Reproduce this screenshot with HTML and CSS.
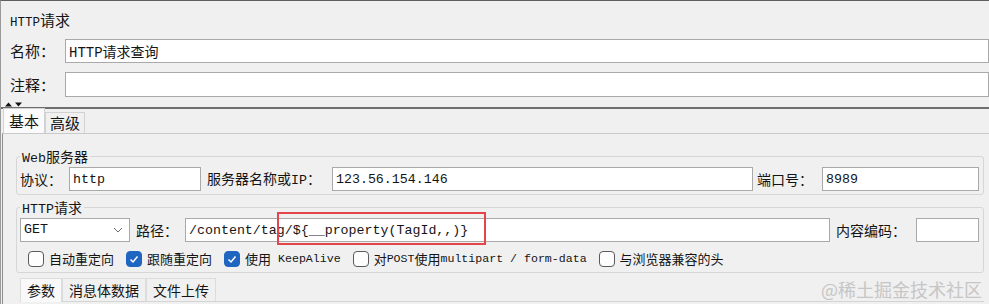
FILE: index.html
```html
<!DOCTYPE html>
<html lang="zh-CN">
<head>
    <meta charset="UTF-8">
    <title>HTTP请求</title>
    <link rel="stylesheet" href="styles.css">
</head>
<body>
    <div class="window">
        <div class="title"><span class="mono">HTTP</span>请求</div>

        <div class="field-row">
            <label>名称：</label>
            <input type="text" value="HTTP请求查询">
        </div>
        <div class="field-row tall">
            <label>注释：</label>
            <input type="text" value="">
        </div>

        <div class="splitter">
            <svg width="22" height="5" viewBox="0 0 22 5">
                <polygon points="3,4.5 6.5,0.5 10,4.5" fill="#111"/>
                <polygon points="13,0.5 20,0.5 16.5,4.5" fill="#111"/>
            </svg>
        </div>

        <div class="tabs">
            <span class="tab active">基本</span>
            <span class="tab">高级</span>
        </div>

        <div class="panel">
            <fieldset class="group">
                <legend><span class="mono">Web</span>服务器</legend>
                <div class="line">
                    <label class="gap-r7">协议：</label>
                    <input class="proto" type="text" value="http">
                    <label class="host-label">服务器名称或<span class="mono">IP</span>：</label>
                    <input class="host" type="text" value="123.56.154.146">
                    <label class="port-label">端口号：</label>
                    <input class="port" type="text" value="8989">
                </div>
            </fieldset>

            <fieldset class="group second">
                <legend><span class="mono">HTTP</span>请求</legend>
                <div class="line">
                    <div class="select">
                        <span class="mono">GET</span>
                        <svg width="10" height="6" viewBox="0 0 10 6">
                            <polyline points="1,1 5,5 9,1" fill="none" stroke="#6b6b6b" stroke-width="1"/>
                        </svg>
                    </div>
                    <label class="path-label">路径：</label>
                    <div class="path-wrap">
                        <input type="text" value="/content/tag/${__property(TagId,,)}">
                        <div class="mark"></div>
                    </div>
                    <label class="enc-label">内容编码：</label>
                    <input class="enc" type="text" value="">
                </div>

                <div class="checks">
                    <div class="check">
                        <span class="box"></span>自动重定向
                    </div>
                    <div class="check">
                        <span class="box on">
                            <svg width="14" height="14" viewBox="0 0 14 14"><polyline points="3.5,7.5 6,10 10.5,4.5" fill="none" stroke="#fff" stroke-width="1.5"/></svg>
                        </span>跟随重定向
                    </div>
                    <div class="check">
                        <span class="box on">
                            <svg width="14" height="14" viewBox="0 0 14 14"><polyline points="3.5,7.5 6,10 10.5,4.5" fill="none" stroke="#fff" stroke-width="1.5"/></svg>
                        </span>使用<span class="mono"> KeepAlive</span>
                    </div>
                    <div class="check">
                        <span class="box"></span>对<span class="mono">POST</span>使用<span class="mono">multipart / form-data</span>
                    </div>
                    <div class="check">
                        <span class="box"></span>与浏览器兼容的头
                    </div>
                </div>
            </fieldset>

            <div class="subtabs">
                <span class="subtab active">参数</span>
                <span class="subtab">消息体数据</span>
                <span class="subtab">文件上传</span>
            </div>
        </div>

        <div class="watermark">@稀土掘金技术社区</div>
    </div>
</body>
</html>
```

FILE: styles.css
```css
body {
    margin: 0;
    background-color: #f0f0f0;
}

.window {
    position: relative;
    width: 989px;
    height: 304px;
    box-sizing: border-box;
    overflow: hidden;
    border-top: 1px solid #5f5f5f;
    border-left: 1px solid #9a9a9a;
    background-color: #f0f0f0;
    color: #141414;
    font-family: "Noto Sans CJK SC", sans-serif;
    font-size: 14px;
    line-height: 16px;
}

.mono {
    font-family: "Liberation Mono", monospace;
    font-size: 13.3px;
}

input {
    box-sizing: border-box;
    height: 24px;
    margin: 0;
    padding: 0 3px;
    border: 1px solid #a9a9a9;
    border-radius: 0;
    background-color: #fff;
    color: #141414;
    font-family: "Liberation Mono", "Noto Sans CJK SC", monospace;
    font-size: 13.3px;
    outline: none;
}

label {
    white-space: nowrap;
}

/* top part */

.title {
    height: 38px;
    line-height: 38px;
    padding-left: 9px;
    font-size: 15px;
}

.title .mono {
    font-size: 12.5px;
}

.field-row {
    display: flex;
    align-items: center;
    height: 24px;
    padding-left: 9px;
    margin-bottom: 9px;
    font-size: 15px;
}

.field-row label {
    width: 55px;
}

.field-row input {
    flex: 1;
    height: 100%;
    font-size: 14px;
}

.field-row.tall {
    height: 25px;
    margin-bottom: 0;
}

.splitter {
    height: 5px;
    padding: 5px 0 0 1px;
    border-bottom: 2px solid #6e6e6e;
}

.splitter svg {
    display: block;
}

.tabs {
    display: flex;
    align-items: flex-end;
    height: 24px;
    padding-left: 2px;
}

.tab {
    box-sizing: border-box;
    height: 21px;
    line-height: 20px;
    padding: 0 4px;
    border: 1px solid #d2d2d2;
    border-bottom: none;
    font-size: 15px;
}

.tab.active {
    height: 25px;
    line-height: 23px;
    padding: 0 5px;
    background-color: #fbfbfb;
}

/* main panel */

.panel {
    margin-left: 1px;
    padding: 0 5px 0 13px;
    height: 170px;
    border-top: 1px solid #cacaca;
    border-left: 1px solid #8e8e8e;
}

.group {
    margin: 15px 0 0 0;
    padding: 4px 4px 3px 3px;
    min-width: 0;
    border: 1px solid #d6d6d6;
    border-radius: 3px;
}

.group legend {
    display: block;
    height: 14px;
    padding: 0 2px;
    font-size: 14px;
    line-height: 14px;
    white-space: nowrap;
}

.group.second {
    margin-top: 5px;
    padding-bottom: 4px;
}

.line {
    display: flex;
    align-items: center;
    height: 24px;
}

.gap-r7 {
    margin-right: 7px;
}

.proto {
    width: 132px;
}

.host-label {
    margin: 0 11px 0 6px;
}

.host {
    flex: 1;
}

.port-label {
    margin: 0 9px 0 4px;
}

.port {
    width: 157px;
}

.select {
    display: flex;
    align-items: center;
    justify-content: space-between;
    box-sizing: border-box;
    width: 110px;
    height: 24px;
    padding: 0 6px 0 3px;
    border: 1px solid #a9a9a9;
    background-color: #fff;
}

.path-label {
    margin: 0 7px 0 6px;
}

.path-wrap {
    position: relative;
    flex: 1;
    height: 24px;
}

.path-wrap input {
    width: 100%;
}

.mark {
    position: absolute;
    left: 92px;
    top: -6px;
    width: 209px;
    height: 33px;
    box-sizing: border-box;
    border: 2px solid #e4454b;
}

.enc-label {
    margin: 0 10px 0 6px;
}

.enc {
    width: 63px;
}

.checks {
    display: flex;
    align-items: center;
    gap: 12px;
    height: 18px;
    margin-top: 8px;
    padding-left: 8px;
    font-size: 13px;
}

.check {
    display: flex;
    align-items: center;
    white-space: nowrap;
}

.check .mono {
    font-size: 11.6px;
    white-space: pre;
}

.box {
    display: flex;
    align-items: center;
    justify-content: center;
    width: 16px;
    height: 16px;
    box-sizing: border-box;
    margin-right: 5px;
    border: 1px solid #5a5a5a;
    border-radius: 4px;
    background-color: #fdfdfd;
}

.box.on {
    border-color: #1f66c1;
    background-color: #1f66c1;
}

.subtabs {
    display: flex;
    align-items: flex-end;
    height: 23px;
    margin: 5px 0 0 4px;
    border-bottom: 1px solid #d4d4d4;
}

.subtab {
    height: 23px;
    line-height: 23px;
    padding: 0 6px;
    border: 1px solid #dcdcdc;
    border-bottom: none;
    box-sizing: border-box;
    font-size: 14px;
}

.subtab.active {
    height: 24px;
    margin-bottom: -1px;
    background-color: #f9f9f9;
}

.watermark {
    position: absolute;
    right: 7px;
    bottom: 4px;
    color: #c6c6c6;
    font-size: 18px;
    line-height: 22px;
}
```
